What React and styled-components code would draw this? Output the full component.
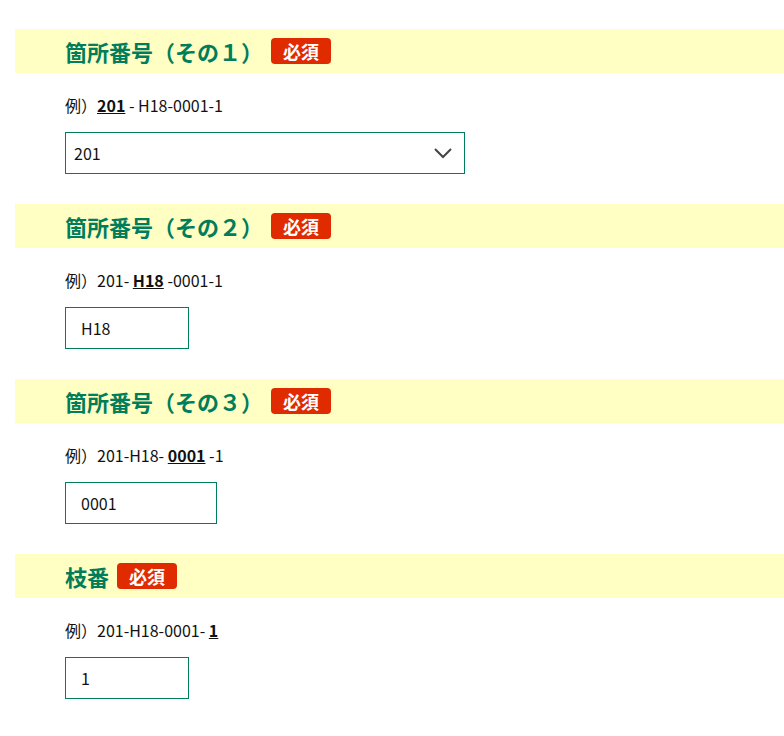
import styled, { createGlobalStyle } from "styled-components";

const GlobalStyle = createGlobalStyle`
  body {
    margin: 0;
    background: #fff;
    font-family: "Noto Sans CJK JP", "Noto Sans", sans-serif;
    color: #111;
  }
`;

const sections = [
  {
    title: "箇所番号（その１）",
    before: "",
    strong: "201",
    after: " - H18-0001-1",
    kind: "select",
    value: "201",
  },
  {
    title: "箇所番号（その２）",
    before: "201- ",
    strong: "H18",
    after: " -0001-1",
    value: "H18",
    width: 124,
  },
  {
    title: "箇所番号（その３）",
    before: "201-H18- ",
    strong: "0001",
    after: " -1",
    value: "0001",
    width: 152,
  },
  {
    title: "枝番",
    before: "201-H18-0001- ",
    strong: "1",
    after: "",
    value: "1",
    width: 124,
  },
];

export default function App() {
  return (
    <Page>
      <GlobalStyle />
      {sections.map((s) => (
        <Section key={s.title}>
          <Header>
            <Title>{s.title}</Title>
            <Badge>必須</Badge>
          </Header>
          <Body>
            <Example>
              例）{s.before}
              <strong>{s.strong}</strong>
              {s.after}
            </Example>
            {s.kind === "select" ? (
              <SelectBox>
                <span>{s.value}</span>
                <svg width="20" height="12" viewBox="0 0 20 12">
                  <path
                    d="M2 2 L10 10 L18 2"
                    fill="none"
                    stroke="#444"
                    strokeWidth="2"
                  />
                </svg>
              </SelectBox>
            ) : (
              <TextInput $width={s.width} defaultValue={s.value} />
            )}
          </Body>
        </Section>
      ))}
    </Page>
  );
}

const Page = styled.div`
  padding: 29px 0 0 15px;
`;

const Section = styled.section`
  margin-bottom: 30px;
`;

const Header = styled.div`
  height: 44px;
  background-color: #ffffc4;
  display: flex;
  align-items: center;
  padding-left: 50px;
  gap: 8px;
`;

const Title = styled.h2`
  margin: 0;
  font-size: 22px;
  font-weight: 700;
  color: #007d5a;
`;

const Badge = styled.span`
  background-color: #e02b00;
  color: #fff;
  font-size: 18px;
  font-weight: 700;
  line-height: 26px;
  padding: 0 12px;
  border-radius: 4px;
`;

const Body = styled.div`
  padding-left: 50px;
`;

const Example = styled.p`
  margin: 22px 0 17px;
  font-size: 16px;
  line-height: 20px;

  strong {
    font-weight: 700;
    text-decoration: underline;
  }
`;

const SelectBox = styled.div`
  box-sizing: border-box;
  width: 400px;
  height: 42px;
  border: 1px solid #007d5a;
  display: flex;
  align-items: center;
  justify-content: space-between;
  padding: 0 11px 0 8px;
  font-size: 16px;
`;

const TextInput = styled.input`
  display: block;
  box-sizing: border-box;
  width: ${(p) => p.$width}px;
  height: 42px;
  border: 1px solid #007d5a;
  padding: 0 15px;
  font-family: "Noto Sans CJK JP", "Noto Sans", sans-serif;
  font-size: 16px;
  color: #111;
  outline: none;
`;
